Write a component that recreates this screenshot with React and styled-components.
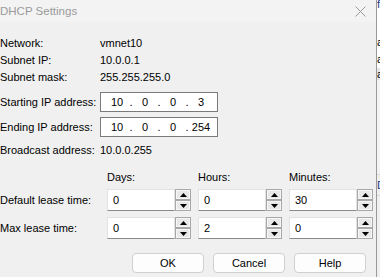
import React from "react";
import styled, { createGlobalStyle } from "styled-components";

const Global = createGlobalStyle`
  html, body { margin: 0; padding: 0; background: #f0f0f0; }
  body {
    font-family: "Liberation Sans", Arial, sans-serif;
    font-size: 11px;
    color: #000;
    overflow: hidden;
  }
  #root { width: 380px; height: 277px; }
`;

const Screen = styled.div`
  display: flex;
  width: 380px;
  height: 277px;
  overflow: hidden;
`;

const Dialog = styled.div`
  width: 376px;
  height: 277px;
  background: #f0f0f0;
  display: flex;
  flex-direction: column;
`;

const Edge = styled.div`
  width: 1px;
  background: #9a9a9a;
`;

const Behind = styled.div`
  flex: 1;
  background: #ffffff;
  overflow: hidden;
  display: flex;
  flex-direction: column;
  font-size: 11px;
  white-space: nowrap;
`;

const BehindLine = styled.div`
  height: ${(p) => p.$h}px;
  line-height: ${(p) => p.$h}px;
  background: ${(p) => p.$bg || "transparent"};
  color: ${(p) => p.$color || "#000"};
  border-bottom: ${(p) => (p.$line ? "1px solid #d6d6d6" : "none")};
`;

const TitleBar = styled.div`
  height: 22px;
  display: flex;
  align-items: center;
  justify-content: space-between;
  background: #f3f3f3;
  color: #9a9a9a;
  font-size: 11.5px;
  padding-right: 10px;
`;

const Body = styled.div`
  padding-top: 12px;
  display: flex;
  flex-direction: column;
`;

const InfoRow = styled.div`
  display: grid;
  grid-template-columns: 100px 1fr;
  height: 17px;
  align-items: center;
  margin-top: ${(p) => p.$top || 0}px;
`;

const IpRow = styled.div`
  display: grid;
  grid-template-columns: 100px 118px;
  height: 20px;
  align-items: center;
  margin-top: ${(p) => p.$top || 0}px;
`;

const IpBox = styled.div`
  box-sizing: border-box;
  height: 20px;
  border: 1px solid #7a7a7a;
  background: #fff;
  display: flex;
  align-items: center;
  padding-left: 5px;
`;

const Octet = styled.span`
  width: 22px;
  text-align: center;
`;

const Dot = styled.span`
  width: 6px;
  text-align: center;
`;

const LeaseRow = styled.div`
  display: grid;
  grid-template-columns: 100px 84px 84px 84px;
  column-gap: 7px;
  align-items: center;
  height: ${(p) => p.$h}px;
  margin-top: ${(p) => p.$top || 0}px;
`;

const Spin = styled.div`
  display: flex;
  height: 22px;
`;

const SpinField = styled.div`
  box-sizing: border-box;
  width: 68px;
  height: 22px;
  background: #fff;
  border: 1px solid #e2e2e2;
  border-bottom: 1px solid #8a8a8a;
  padding-left: 5px;
  display: flex;
  align-items: center;
`;

const SpinButtons = styled.div`
  width: 16px;
  display: flex;
  flex-direction: column;
`;

const SpinBtn = styled.div`
  box-sizing: border-box;
  height: 11px;
  border: 1px solid #a8a8a8;
  background: #e8e8e8;
  box-shadow: inset 0 0 0 1px #f7f7f7;
  display: flex;
  align-items: center;
  justify-content: center;
`;

const ButtonRow = styled.div`
  display: flex;
  justify-content: flex-end;
  gap: 9px;
  padding-right: 10px;
  margin-top: 14px;
`;

const Button = styled.button`
  box-sizing: border-box;
  width: 72px;
  height: 20px;
  border: 1px solid #d0d0d0;
  border-radius: 4px;
  background: #fdfdfd;
  font-family: inherit;
  font-size: 11px;
  color: #000;
  padding: 0;
`;

const Arrow = ({ up }) => (
  <svg width="7" height="4" viewBox="0 0 7 4">
    {up ? (
      <polygon points="0,4 7,4 3.5,0" fill="#000" />
    ) : (
      <polygon points="0,0 7,0 3.5,4" fill="#000" />
    )}
  </svg>
);

const CloseIcon = () => (
  <svg width="11" height="11" viewBox="0 0 11 11">
    <path d="M0.5 0.5 L10.5 10.5 M10.5 0.5 L0.5 10.5" stroke="#9a9a9a" strokeWidth="1" />
  </svg>
);

const IpField = ({ parts }) => (
  <IpBox>
    {parts.map((p, i) => (
      <React.Fragment key={i}>
        {i > 0 && <Dot>.</Dot>}
        <Octet>{p}</Octet>
      </React.Fragment>
    ))}
  </IpBox>
);

const Spinner = ({ value }) => (
  <Spin>
    <SpinField>{value}</SpinField>
    <SpinButtons>
      <SpinBtn><Arrow up /></SpinBtn>
      <SpinBtn><Arrow /></SpinBtn>
    </SpinButtons>
  </Spin>
);

export default function App() {
  return (
    <>
      <Global />
      <Screen>
        <Dialog>
          <TitleBar>
            <span>DHCP Settings</span>
            <CloseIcon />
          </TitleBar>
          <Body>
            <InfoRow>
              <span>Network:</span>
              <span>vmnet10</span>
            </InfoRow>
            <InfoRow>
              <span>Subnet IP:</span>
              <span>10.0.0.1</span>
            </InfoRow>
            <InfoRow>
              <span>Subnet mask:</span>
              <span>255.255.255.0</span>
            </InfoRow>
            <IpRow $top={7}>
              <span>Starting IP address:</span>
              <IpField parts={["10", "0", "0", "3"]} />
            </IpRow>
            <IpRow $top={5}>
              <span>Ending IP address:</span>
              <IpField parts={["10", "0", "0", "254"]} />
            </IpRow>
            <InfoRow $top={4}>
              <span>Broadcast address:</span>
              <span>10.0.0.255</span>
            </InfoRow>
            <LeaseRow $h={17} $top={10}>
              <span />
              <span>Days:</span>
              <span>Hours:</span>
              <span>Minutes:</span>
            </LeaseRow>
            <LeaseRow $h={22} $top={4}>
              <span>Default lease time:</span>
              <Spinner value="0" />
              <Spinner value="0" />
              <Spinner value="30" />
            </LeaseRow>
            <LeaseRow $h={22} $top={6}>
              <span>Max lease time:</span>
              <Spinner value="0" />
              <Spinner value="2" />
              <Spinner value="0" />
            </LeaseRow>
            <ButtonRow>
              <Button>OK</Button>
              <Button>Cancel</Button>
              <Button>Help</Button>
            </ButtonRow>
          </Body>
        </Dialog>
        <Edge />
        <Behind>
          <BehindLine $h={8} $color="#1a3a8a">fe</BehindLine>
          <BehindLine $h={26} />
          <BehindLine $h={17}>a</BehindLine>
          <BehindLine $h={17}>a</BehindLine>
          <BehindLine $h={12} $bg="#e6e6e6">a</BehindLine>
          <BehindLine $h={95} $bg="#f3f3f3" $line />
          <BehindLine $h={20} $bg="#f0f0f0" $color="#1a3a8a" $line>D</BehindLine>
          <BehindLine $h={82} $bg="#f0f0f0" />
        </Behind>
      </Screen>
    </>
  );
}
